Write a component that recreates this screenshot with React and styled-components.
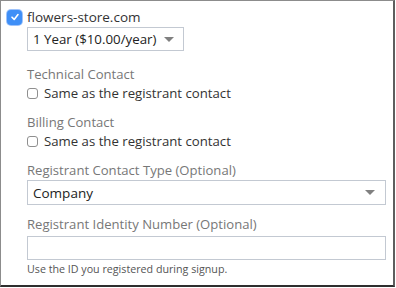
import React from "react";
import styled, { createGlobalStyle } from "styled-components";

const GlobalStyle = createGlobalStyle`
  html, body {
    margin: 0;
    padding: 0;
    background: #fff;
  }
  body {
    font-family: "Open Sans", "Noto Sans", sans-serif;
  }
`;

const Frame = styled.div`
  box-sizing: border-box;
  width: 395px;
  height: 287px;
  border-top: 1px solid #8c8c8c;
  border-left: 1px solid #8c8c8c;
  border-right: 2px solid #5e5e5e;
  border-bottom: 2px solid #2e2e2e;
  padding: 7px 8px 0 6px;
`;

const DomainRow = styled.label`
  display: flex;
  align-items: center;
  gap: 5px;
  height: 18px;
  font-size: 13.5px;
  color: #333;
`;

const BlueCheck = styled.span`
  width: 15px;
  height: 15px;
  border-radius: 4px;
  background: #3f8ff7;
  box-shadow: 0 0 0 1px #9ec3fb;
  display: flex;
  align-items: center;
  justify-content: center;
`;

const Body = styled.div`
  padding-left: 20px;
  display: flex;
  flex-direction: column;
`;

const SelectBox = styled.div`
  box-sizing: border-box;
  margin-top: ${(p) => p.$top || 0}px;
  width: ${(p) => (p.$full ? "359px" : "157px")};
  height: ${(p) => (p.$full ? "25px" : "24px")};
  border: 1px solid #c3c9d2;
  display: flex;
  align-items: center;
  justify-content: space-between;
  gap: 8px;
  padding: 0 10px 0 5px;
  font-size: ${(p) => (p.$full ? "13.5px" : "13.3px")};
  color: #222;
  white-space: nowrap;
`;

const Arrow = styled.span`
  flex-shrink: 0;
  width: 0;
  height: 0;
  border-left: 5px solid transparent;
  border-right: 5px solid transparent;
  border-top: 5px solid #808080;
`;

const Label = styled.div`
  margin-top: ${(p) => p.$top}px;
  font-size: 13.1px;
  line-height: 18px;
  color: #777;
`;

const CheckRow = styled.label`
  display: flex;
  align-items: center;
  gap: 6px;
  height: 20px;
  font-size: 13.2px;
  color: #333;
`;

const EmptyBox = styled.span`
  box-sizing: border-box;
  width: 11px;
  height: 11px;
  border: 1px solid #8f8f8f;
  border-radius: 3px;
`;

const TextInput = styled.div`
  box-sizing: border-box;
  margin-top: 3px;
  width: 359px;
  height: 24px;
  border: 1px solid #c3c9d2;
`;

const Help = styled.div`
  margin-top: 2px;
  font-size: 10.7px;
  color: #555;
`;

const App = () => {
  return (
    <Frame>
      <GlobalStyle />
      <DomainRow>
        <BlueCheck>
          <svg width="10" height="10" viewBox="0 0 10 10">
            <path d="M2 5.2 L4.2 7.4 L8 2.6" fill="none" stroke="#fff" strokeWidth="1.6" strokeLinecap="round" strokeLinejoin="round" />
          </svg>
        </BlueCheck>
        flowers-store.com
      </DomainRow>
      <Body>
        <SelectBox $top={1}>
          1 Year ($10.00/year)
          <Arrow />
        </SelectBox>
        <Label $top={14}>Technical Contact</Label>
        <CheckRow>
          <EmptyBox />
          Same as the registrant contact
        </CheckRow>
        <Label $top={10}>Billing Contact</Label>
        <CheckRow>
          <EmptyBox />
          Same as the registrant contact
        </CheckRow>
        <Label $top={10}>Registrant Contact Type (Optional)</Label>
        <SelectBox $full $top={1}>
          Company
          <Arrow />
        </SelectBox>
        <Label $top={10}>Registrant Identity Number (Optional)</Label>
        <TextInput />
        <Help>Use the ID you registered during signup.</Help>
      </Body>
    </Frame>
  );
};

export default App;
